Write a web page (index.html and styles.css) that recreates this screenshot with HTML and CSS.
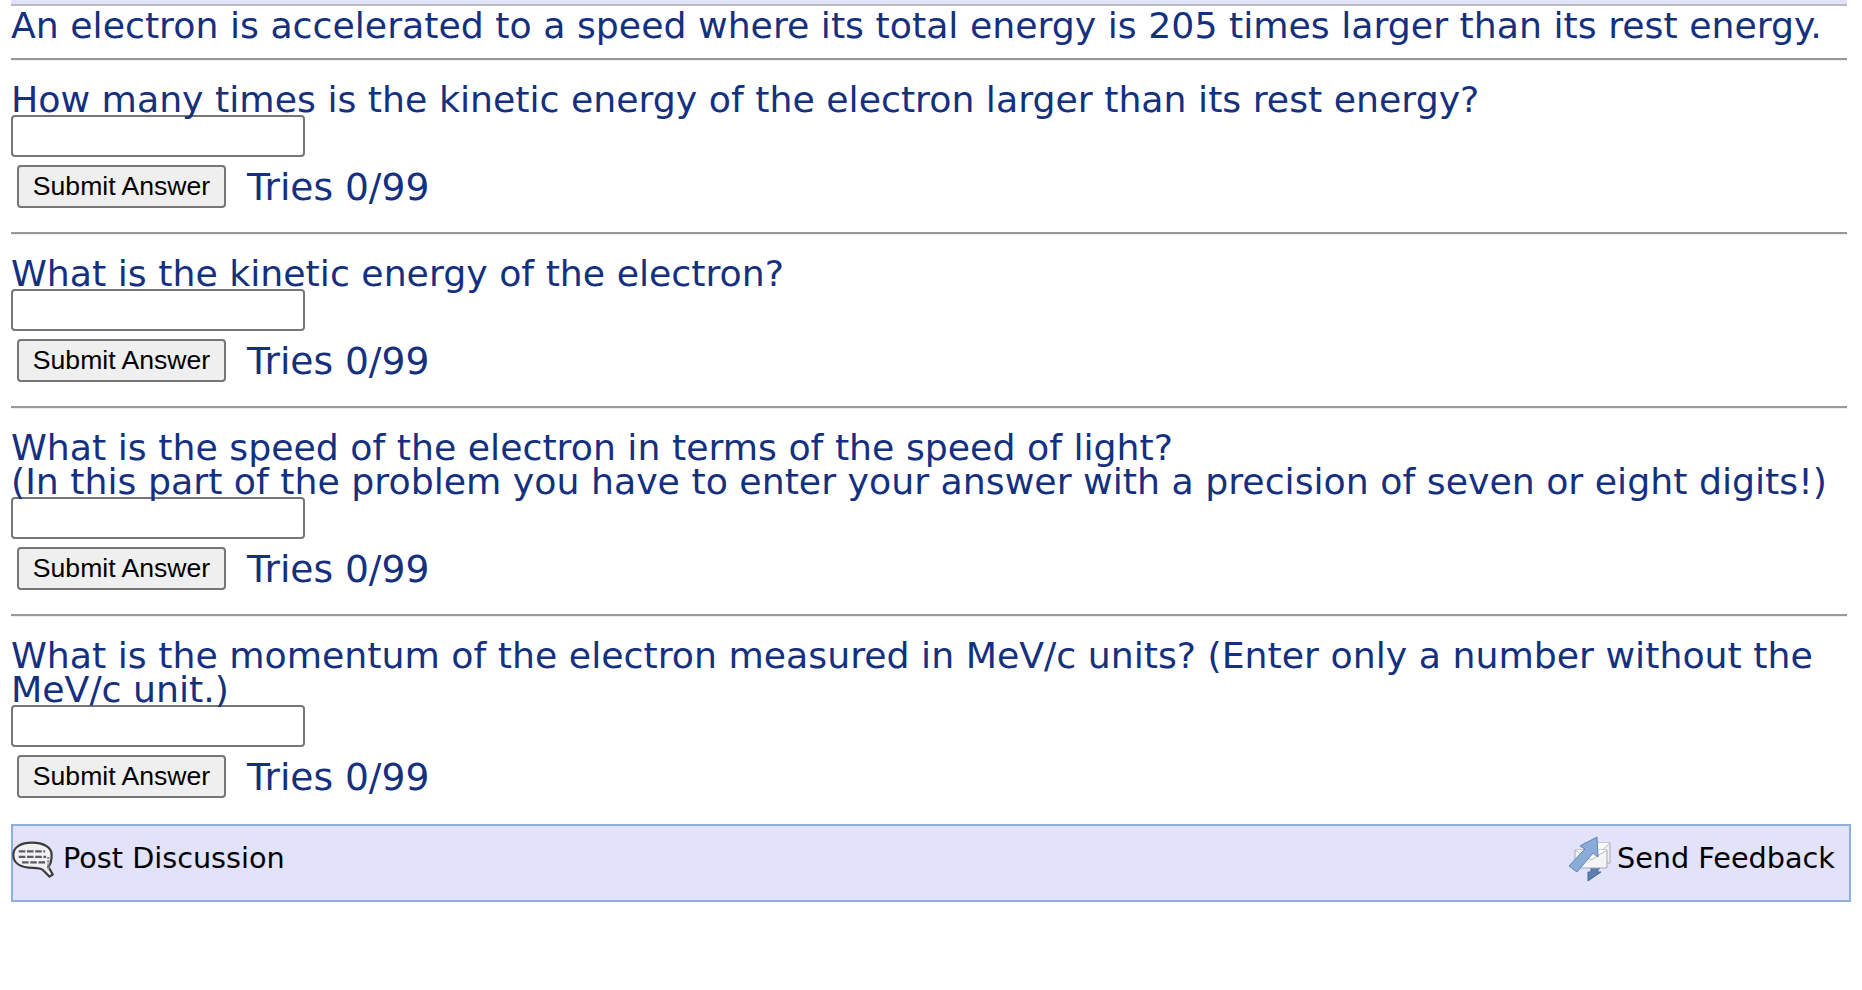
FILE: index.html
```html
<!DOCTYPE html>
<html lang="en">
<head>
    <meta charset="UTF-8">
    <title>Problem</title>
    <link rel="stylesheet" href="styles.css">
</head>
<body>
    <div class="top-band"></div>
    <div class="problem">
        <p class="text">An electron is accelerated to a speed where its total energy is 205 times larger than its rest energy.</p>
        <hr>
        <p class="text">How many times is the kinetic energy of the electron larger than its rest energy?</p>
        <input class="answer" type="text">
        <div class="submit-row">
            <button class="submit-btn">Submit Answer</button>
            <span class="tries">Tries 0/99</span>
        </div>
        <hr>
        <p class="text">What is the kinetic energy of the electron?</p>
        <input class="answer" type="text">
        <div class="submit-row">
            <button class="submit-btn">Submit Answer</button>
            <span class="tries">Tries 0/99</span>
        </div>
        <hr>
        <p class="text">What is the speed of the electron in terms of the speed of light?<br>(In this part of the problem you have to enter your answer with a precision of seven or eight digits!)</p>
        <input class="answer" type="text">
        <div class="submit-row">
            <button class="submit-btn">Submit Answer</button>
            <span class="tries">Tries 0/99</span>
        </div>
        <hr>
        <p class="text">What is the momentum of the electron measured in MeV/c units? (Enter only a number without the MeV/c unit.)</p>
        <input class="answer" type="text">
        <div class="submit-row">
            <button class="submit-btn">Submit Answer</button>
            <span class="tries">Tries 0/99</span>
        </div>
    </div>
    <div class="action-bar">
        <a class="action post">
            <svg class="icon" width="42" height="46" viewBox="0 0 38 42">
                <path d="M18 7 C8 7 1 11 1 18 C1 26 8 30 19 30 C23 30 26 30 28 32 L34 38 L37 36 L33 29 C35 27 36 23 36 18 C36 11 28 7 18 7 Z" fill="#f1f1f3" stroke="#3c3c40" stroke-width="2"/>
                <path d="M6 15 H30 M6 20 H31 M9 25 H30" stroke="#5a5a60" stroke-width="2" stroke-dasharray="6 1.5" fill="none"/>
                <path d="M33 20 V32" stroke="#8a8a90" stroke-width="2" stroke-dasharray="2 1" fill="none"/>
            </svg>
            Post Discussion
        </a>
        <a class="action send">
            <svg class="icon" width="46" height="46" viewBox="0 0 46 46">
                <path d="M23 28 L35 28 L29 37 L33 37 L20 46 L20 37 L23 37 Z" fill="#5f7fb2" stroke="#4a6796" stroke-width="1"/>
                <path d="M16 8 H42 V28 H16 Z" fill="#efeff2" stroke="#a4a9b4" stroke-width="1"/>
                <path d="M16 8 L30 19 L42 8" fill="#fafafa" stroke="#b5bac4" stroke-width="1"/>
                <path d="M7 15 H39 V33 H7 Z" fill="#f4f4f6" stroke="#a4a9b4" stroke-width="1"/>
                <path d="M7 15 L23 25 L39 15" fill="#fcfcfc" stroke="#b5bac4" stroke-width="1"/>
                <path d="M29 2 L30 22 L25 18 L9 37 L1 31 L17 14 L12 11 Z" fill="#8bacd8" stroke="#5f83b8" stroke-width="1"/>
            </svg>
            Send Feedback
        </a>
    </div>
</body>
</html>
```
FILE: styles.css
```css
* {
    box-sizing: border-box;
}

body {
    margin: 0;
    background: #fff;
    font-family: "DejaVu Sans", sans-serif;
}

.top-band {
    height: 6px;
    margin-left: 11px;
    margin-right: 15px;
    background: #e2e2fa;
    border-bottom: 2px solid #bbb;
}

.problem {
    padding: 1px 15px 0 11px;
}

.text {
    margin: 1.5px 0 -1.5px;
    font-size: 36.26px;
    line-height: 34px;
    color: #14307f;
}

hr {
    height: 3px;
    margin: 17px 0 21.5px;
    border: none;
    border-top: 2px solid #999;
    border-bottom: 1px solid #eee;
}

.answer {
    display: block;
    width: 294px;
    height: 42px;
    margin: 0;
    background: #fff;
    border: 2px solid #767676;
    border-radius: 4px;
}

.submit-row {
    display: flex;
    align-items: center;
    gap: 21px;
    margin-top: 8px;
    margin-bottom: 24px;
    padding-left: 6px;
}

.submit-btn {
    width: 209px;
    height: 43px;
    padding: 0;
    background: #efefef;
    border: 2px solid #767676;
    border-radius: 4px;
    font-family: "Liberation Sans", sans-serif;
    font-size: 26.6px;
    color: #000;
}

.tries {
    margin-top: 2px;
    font-size: 37.6px;
    line-height: 1;
    color: #14307f;
}

.action-bar {
    display: flex;
    justify-content: space-between;
    height: 78px;
    margin: 26px 11px 0;
    padding: 9px 14px 0 0;
    background: #e2e2fa;
    border: 2px solid #8fb0de;
    font-size: 28.7px;
    color: #000;
}

.action {
    display: flex;
    align-items: center;
    align-self: flex-start;
    height: 46px;
}

.post {
    gap: 9px;
    margin-left: -1px;
}

.send {
    gap: 3px;
}
```
